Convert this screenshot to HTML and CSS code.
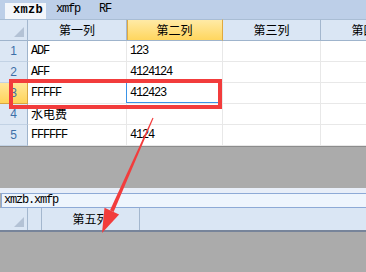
FILE: index.html
```html
<!DOCTYPE html>
<html lang="zh">
<head>
    <meta charset="UTF-8">
    <title>xmzb</title>
    <link rel="stylesheet" href="styles.css">
</head>
<body>
    <div class="tabs">
        <div class="tab active">xmzb</div>
        <div class="tab">xmfp</div>
        <div class="tab">RF</div>
    </div>

    <div class="grid">
        <div class="hd corner"><span class="tri"></span></div>
        <div class="hd">第一列</div>
        <div class="hd sel">第二列</div>
        <div class="hd">第三列</div>
        <div class="hd">第四列</div>

        <div class="rh">1</div><div class="cell">ADF</div><div class="cell">123</div><div class="cell"></div><div class="cell"></div>
        <div class="rh">2</div><div class="cell">AFF</div><div class="cell">4124124</div><div class="cell"></div><div class="cell"></div>
        <div class="rh sel">3</div><div class="cell">FFFFF</div><div class="cell editing">412423</div><div class="cell"></div><div class="cell"></div>
        <div class="rh">4</div><div class="cell cjk">水电费</div><div class="cell"></div><div class="cell"></div><div class="cell"></div>
        <div class="rh">5</div><div class="cell">FFFFFF</div><div class="cell">4124</div><div class="cell"></div><div class="cell"></div>
    </div>

    <div class="gap"></div>

    <div class="panel">
        <div class="strip"></div>
        <div class="name">xmzb.xmfp</div>
        <div class="grid2">
            <div class="hd corner"><span class="tri"></span></div>
            <div class="hd"></div>
            <div class="hd">第五列</div>
            <div class="hd"></div>
        </div>
    </div>

    <!-- annotation drawn over the screenshot -->
    <svg class="marks" width="366" height="272" viewBox="0 0 366 272">
        <rect x="11" y="81" width="209" height="26" fill="none" stroke="#f23c3c" stroke-width="4"/>
        <polygon fill="#f23c3c" points="153.5,118.2 152.5,117.8 110,210.3 113.6,211.9"/>
        <polygon fill="#f23c3c" points="102,233 104.5,207.8 119.1,214.4"/>
    </svg>
</body>
</html>
```

FILE: styles.css
```css
body {
    margin: 0;
    width: 366px;
    height: 272px;
    overflow: hidden;
    position: relative;
    background-color: #ababab;
    font-family: "Liberation Mono", monospace;
}

.tabs {
    height: 19px;
    display: flex;
    background-color: #bdcfe8;
}

.tab {
    width: 43px;
    padding-left: 10px;
    box-sizing: border-box;
    font-size: 12px;
    letter-spacing: -1.2px;
    line-height: 19px;
    color: #000;
}

.tab.active {
    width: 41px;
    padding-left: 8px;
    margin-left: 5px;
    margin-top: 3px;
    line-height: 15px;
    background-color: #f3f6fb;
    font-weight: bold;
    letter-spacing: 0.3px;
}

.grid {
    display: grid;
    grid-template-columns: 28px 99px 96px 98px 98px;
    grid-auto-rows: 21px;
    grid-template-rows: 22px;
    background-color: #fff;
}

.hd {
    box-sizing: border-box;
    background-color: #dae6f4;
    border-top: 1px solid #a9bdd4;
    border-bottom: 1px solid #9fb4cc;
    border-right: 1px solid #a3b7ce;
    font-family: "Noto Sans CJK SC", sans-serif;
    font-size: 12px;
    line-height: 20px;
    text-align: center;
    white-space: nowrap;
    overflow: hidden;
}

.hd.sel {
    background: linear-gradient(#ffeaa6, #ffd65e);
    border-right-color: #e0a93e;
    box-shadow: inset 1px 0 0 #e0a93e;
}

.corner {
    position: relative;
}

.tri {
    position: absolute;
    right: 3px;
    bottom: 3px;
    width: 0;
    height: 0;
    border-left: 10px solid transparent;
    border-bottom: 10px solid #b3c2d5;
}

.rh {
    box-sizing: border-box;
    background-color: #dce7f4;
    border-right: 1px solid #9fb4cc;
    border-bottom: 1px solid #c2d2e4;
    font-family: "Liberation Sans", sans-serif;
    font-size: 12px;
    line-height: 20px;
    text-align: center;
    color: #3c6fa8;
}

.rh.sel {
    background: linear-gradient(#ffe79a, #ffd45a);
    border-right-color: #d9a540;
    border-bottom-color: #d9a540;
}

.cell {
    box-sizing: border-box;
    border-right: 1px solid #e8e8e8;
    border-bottom: 1px solid #e8e8e8;
    padding-left: 3px;
    font-size: 12px;
    letter-spacing: -1.2px;
    line-height: 20px;
    color: #000;
    white-space: nowrap;
}

.cell.cjk {
    font-family: "Noto Sans CJK SC", sans-serif;
    letter-spacing: 0;
}

.cell.editing {
    position: relative;
}

.cell.editing::after {
    content: "";
    position: absolute;
    top: -1px;
    left: -1px;
    right: 2px;
    bottom: 0;
    border: 1px solid #3a93e6;
}

.gap {
    height: 41px;
    border-top: 1px solid #8c8c8c;
}

.panel {
    border-bottom: 2px solid #77849a;
}

.strip {
    height: 5px;
    background-color: #e8eef8;
}

.name {
    height: 13px;
    margin-left: 1px;
    padding-left: 2px;
    border-top: 1px solid #8eaad6;
    border-bottom: 1px solid #8eaad6;
    border-left: 1px solid #8eaad6;
    background-color: #eef5fd;
    font-size: 12px;
    letter-spacing: -1.2px;
    line-height: 13px;
}

.grid2 {
    display: grid;
    grid-template-columns: 28px 14px 98px 1fr;
    height: 22px;
}

.grid2 .hd {
    border-top: 0;
    border-bottom: 0;
    line-height: 22px;
}

.grid2 .hd:last-child {
    border-right: 0;
}

.marks {
    position: absolute;
    left: 0;
    top: 0;
}
```
